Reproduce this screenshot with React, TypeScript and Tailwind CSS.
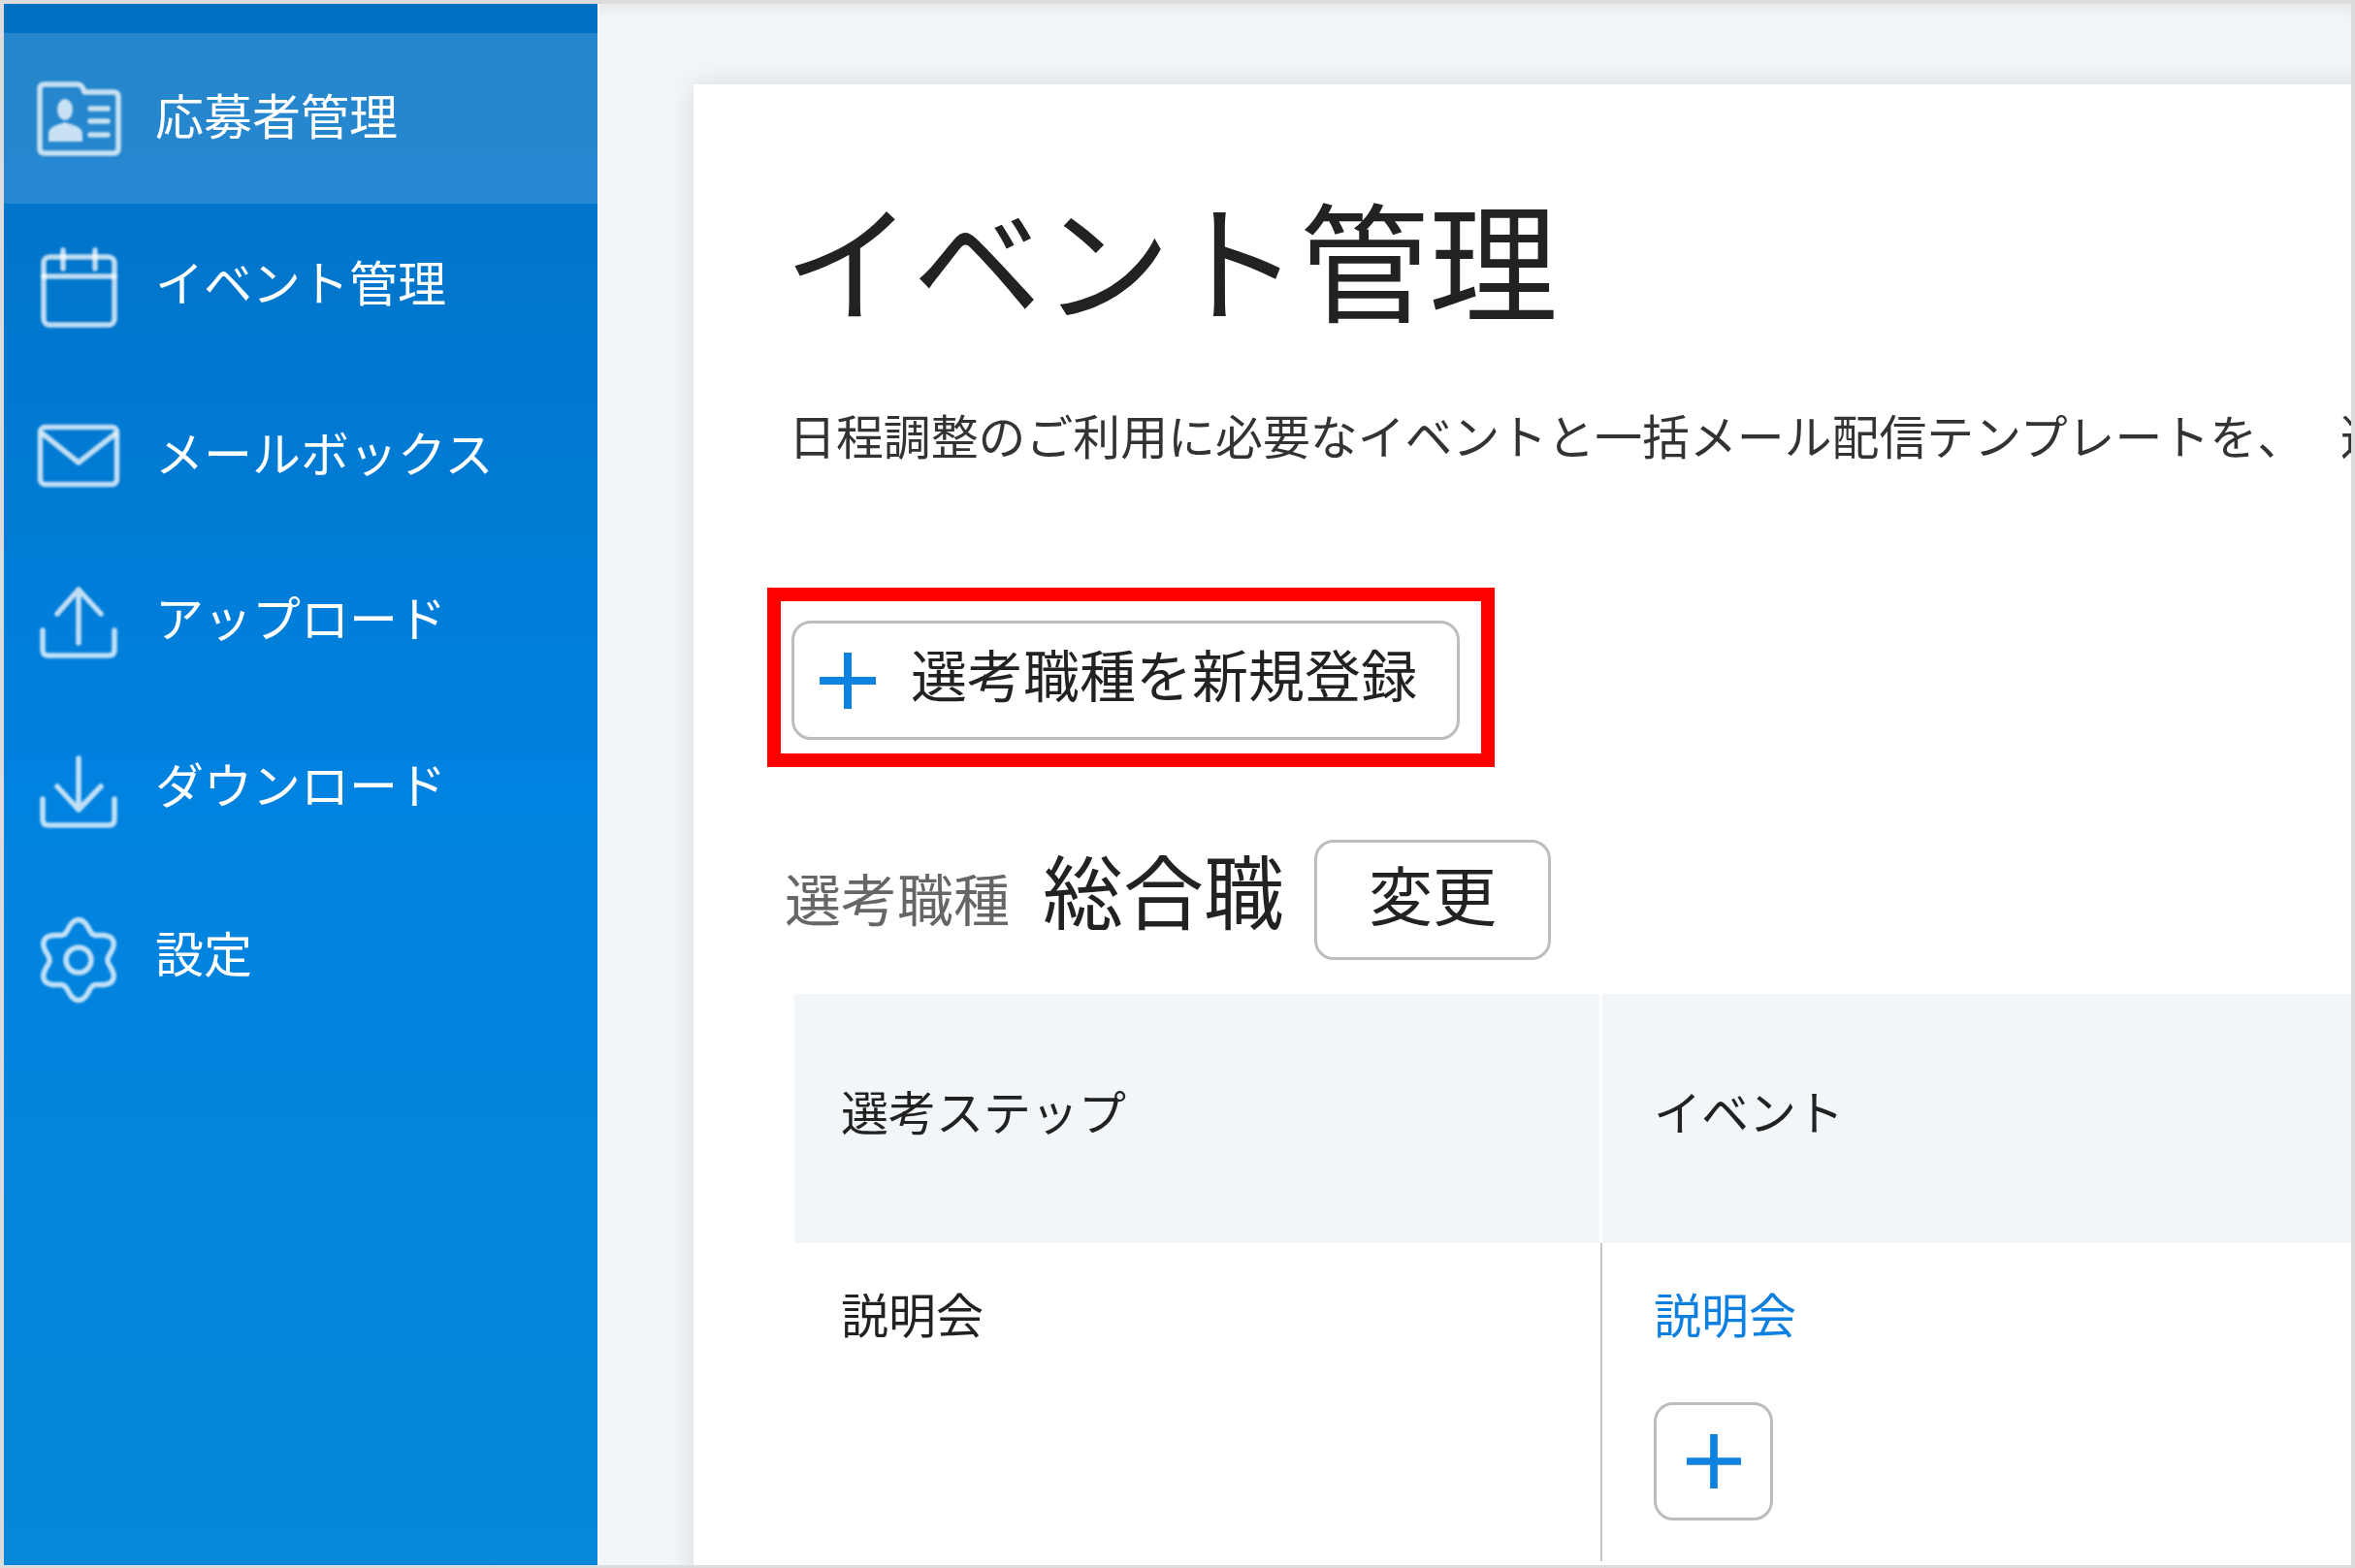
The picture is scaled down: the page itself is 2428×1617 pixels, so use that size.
import React from "react";

const gearPath = (() => {
  const pts: string[] = [];
  const n = 180;
  for (let i = 0; i <= n; i++) {
    const t = (i / n) * Math.PI * 2;
    const r = 36 + 5.5 * Math.cos(6 * t);
    const x = 50 + r * Math.sin(t) * 0.98;
    const y = 51 - r * Math.cos(t);
    pts.push(`${i === 0 ? "M" : "L"}${x.toFixed(2)} ${y.toFixed(2)}`);
  }
  return pts.join(" ") + " Z";
})();

const iconBase = {
  viewBox: "0 0 100 100",
  fill: "none",
  stroke: "currentColor",
  strokeWidth: 5.5,
  strokeLinecap: "round" as const,
  strokeLinejoin: "round" as const,
  className: "h-[100px] w-[100px] shrink-0 text-white/75 blur-[0.9px]",
};

const IdIcon = () => (
  <svg {...iconBase}>
    <path d="M10 20 q0-5 5-5 h34 q4 0 6 5 l1 3 h30 q5 0 5 5 v53 q0 5-5 5 H15 q-5 0-5-5 Z" />
    <ellipse cx="36" cy="41" rx="8" ry="11" fill="currentColor" stroke="none" />
    <path d="M19 74 v-8 q0-6 8-9 l9-3 l9 3 q9 3 9 9 v8 Z" fill="currentColor" stroke="none" />
    <path d="M62 40 H80 M62 53 H80 M62 67 H80" />
  </svg>
);
const CalIcon = () => (
  <svg {...iconBase}>
    <rect x="14" y="18" width="73" height="70" rx="6" />
    <path d="M14 38 H87 M34 11 V30 M67 11 V30" />
  </svg>
);
const MailIcon = () => (
  <svg {...iconBase}>
    <rect x="10.5" y="20.5" width="79" height="59" rx="5" />
    <path d="M14 28 L50 57 L87 28" />
  </svg>
);
const UpIcon = () => (
  <svg {...iconBase}>
    <path d="M50 15 V70 M28 40 L50 15 L73 40" />
    <path d="M13 57 V77 q0 6 6 6 H81 q6 0 6-6 V57" />
  </svg>
);
const DownIcon = () => (
  <svg {...iconBase}>
    <path d="M50 16 V69 M28 45 L50 69 L73 45" />
    <path d="M13 58 V79 q0 6 6 6 H81 q6 0 6-6 V58" />
  </svg>
);
const GearIcon = () => (
  <svg {...iconBase}>
    <path d={gearPath} />
    <circle cx="50" cy="51" r="13" />
  </svg>
);

const Plus = ({ size = 60 }: { size?: number }) => (
  <svg viewBox="0 0 60 60" width={size} height={size} className="shrink-0 blur-[0.5px]">
    <path d="M30 1 V59 M1 30 H59" stroke="#0f82e0" strokeWidth="8" fill="none" />
  </svg>
);

const items = [
  { label: "応募者管理", Icon: IdIcon, active: true, shift: "-translate-y-[5px]" },
  { label: "イベント管理", Icon: CalIcon, shift: "-translate-y-[8px]" },
  { label: "メールボックス", Icon: MailIcon, shift: "-translate-y-[5px]" },
  { label: "アップロード", Icon: UpIcon, shift: "-translate-y-[8px]" },
  { label: "ダウンロード", Icon: DownIcon, shift: "-translate-y-[9px]" },
  { label: "設定", Icon: GearIcon, shift: "-translate-y-[8px]" },
];

export default function App() {
  return (
    <div className="flex h-[1617px] w-[2428px] overflow-hidden border-t-4 border-r-4 border-b-[3px] border-l-4 border-[#dcdcdc] bg-white font-['Noto_Sans_CJK_JP',sans-serif] text-[#222222]">
      <aside className="h-full w-[612px] shrink-0 bg-linear-to-b from-[#0070c2] via-[#0082e0] to-[#0688d8] pt-[30px] text-white">
        {items.map(({ label, Icon, active, shift }) => (
          <div
            key={label}
            className={`flex items-center gap-[29px] pl-[27px] ${active ? "h-[176px] bg-white/15" : "h-[173px]"}`}
          >
            <Icon />
            <span className={`text-[50px] leading-[60px] ${shift}`}>{label}</span>
          </div>
        ))}
      </aside>
      <main className="ml-[2px] h-full min-w-0 flex-1 overflow-hidden bg-[#f2f6f9] pt-[83px] pl-[97px] shadow-[inset_0_14px_16px_-10px_rgba(0,0,0,0.07)]">
        <div className="flex h-[1600px] w-[1800px] flex-col bg-white pt-[112px] pl-[101px] shadow-[0_0_28px_rgba(0,0,0,0.11)]">
          <h1 className="-ml-[8px] text-[133px] leading-[130px] font-normal">イベント管理</h1>
          <p className="mt-[89px] -ml-[3px] whitespace-nowrap text-[48.9px] leading-[60px] text-[#333333]">
            日程調整のご利用に必要なイベントと一括メール配信テンプレートを、
            <span className="ml-[37px]">選考ステップごとに登録してください。</span>
          </p>
          <div className="relative mt-[162px] w-[689px]">
            <button className="flex h-[123px] w-[689px] items-center rounded-[20px] border-[3px] border-[#bdbdbd] bg-white pl-[25px]">
              <Plus />
              <span className="ml-[35px] -translate-y-[8px] whitespace-nowrap text-[58px] leading-[70px]">
                選考職種を新規登録
              </span>
            </button>
            <div className="absolute -top-[34px] -right-[36px] -bottom-[28px] -left-[25px] border-[14px] border-[#ff0000]" />
          </div>
          <div className="mt-[103px] flex h-[124px] items-center">
            <span className="-ml-[7px] -translate-y-[3px] text-[58px] leading-[70px] text-[#666666]">選考職種</span>
            <span className="ml-[34px] -translate-y-[12px] text-[83px] leading-[90px]">総合職</span>
            <button className="ml-[31px] flex h-[124px] w-[244px] items-center justify-center rounded-[20px] border-[3px] border-[#bdbdbd] bg-white text-[66px] leading-[70px]">
              <span className="-translate-y-[8px]">変更</span>
            </button>
          </div>
          <div className="mt-[35px] ml-[3px] grid w-[1700px] grid-cols-[833px_1fr] text-[49px] leading-[60px]">
            <div className="flex h-[257px] items-center border-r-[3px] border-white bg-[#f2f6f9] pl-[48px]">
              <span className="-translate-y-[9px]">選考ステップ</span>
            </div>
            <div className="flex h-[257px] items-center bg-[#f2f6f9] pl-[53px]">
              <span className="-translate-y-[9px]">イベント</span>
            </div>
            <div className="border-r-2 border-[#c4c4c4] pt-[42px] pb-[42px] pl-[48px]">説明会</div>
            <div className="pt-[42px] pb-[42px] pl-[53px]">
              <a className="block text-[#1080e0]">説明会</a>
              <button className="mt-[62px] flex h-[122px] w-[123px] items-center justify-center rounded-[20px] border-[3px] border-[#bdbdbd] bg-white">
                <Plus size={58} />
              </button>
            </div>
          </div>
        </div>
      </main>
    </div>
  );
}
